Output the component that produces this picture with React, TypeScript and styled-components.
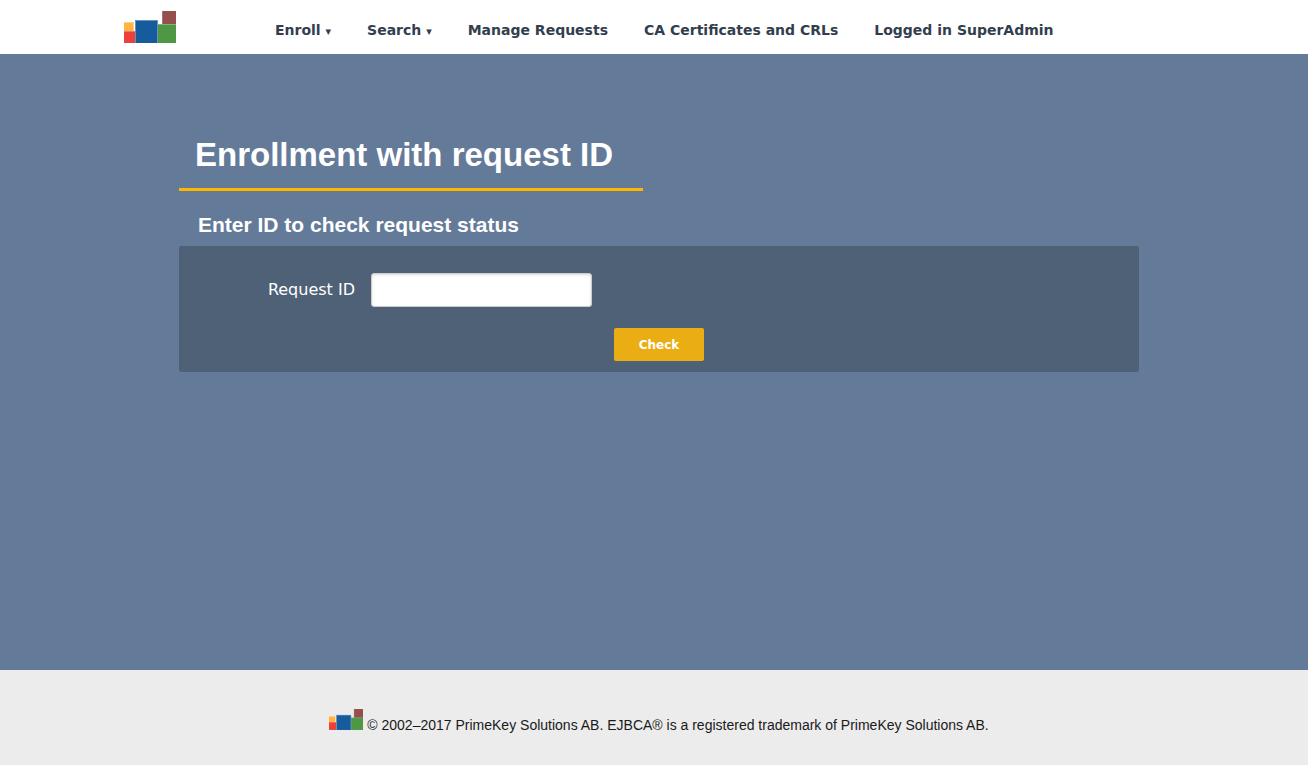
import React from "react";
import styled, { createGlobalStyle } from "styled-components";

const GlobalStyle = createGlobalStyle`
  *, *::before, *::after { box-sizing: border-box; }
  body {
    margin: 0;
    background: #647a99;
    font-family: "DejaVu Sans", sans-serif;
  }
`;

const Page = styled.div`
  min-height: 100vh;
  display: flex;
  flex-direction: column;
`;

const Header = styled.header`
  background: #fff;
  padding: 11px 0 11px 10px;
`;

const HeaderInner = styled.div`
  display: flex;
  align-items: center;
  max-width: 1070px;
  margin: 0 auto;
`;

const LogoSvg = styled.svg<{ $width: number }>`
  display: block;
  flex: none;
  width: ${(p) => p.$width}px;
  height: auto;
`;

const Nav = styled.nav`
  margin-left: 99px;
  padding-top: 8px;
`;

const Menu = styled.ul`
  display: flex;
  flex-wrap: wrap;
  column-gap: 36px;
  margin: 0;
  padding: 0;
  list-style: none;
`;

const MenuLink = styled.a`
  color: #323e4e;
  font-size: 14px;
  line-height: 20px;
  font-weight: bold;
  text-decoration: none;
`;

const Caret = styled.span`
  font-size: 11px;
`;

const Main = styled.main`
  flex: 1;
  padding: 74px 0 32px 10px;
`;

const Content = styled.div`
  max-width: 960px;
  margin: 0 auto;
  color: #fff;
`;

const Title = styled.h1`
  width: fit-content;
  margin: 0;
  padding: 7px 30px 13px 16px;
  border-bottom: 3px solid #ffb700;
  font: bold 33px/40px "Liberation Sans", Arial, sans-serif;
`;

const Subtitle = styled.h2`
  margin: 21px 0 8px 19px;
  font: bold 21px/26px "Liberation Sans", Arial, sans-serif;
`;

const Panel = styled.form`
  padding: 27px 16px 11px;
  border-radius: 2px;
  background: #4f6177;
`;

const Field = styled.div`
  display: flex;
  align-items: center;
  gap: 16px;
`;

const Label = styled.label`
  width: 160px;
  text-align: right;
  font-size: 16px;
  line-height: 20px;
`;

const TextInput = styled.input`
  width: 221px;
  height: 34px;
  padding: 6px 8px;
  border: 1px solid #ccc;
  border-radius: 3px;
  background: #fff;
  box-shadow: inset 0 1px 3px #ddd;
  font: 14px "DejaVu Sans", sans-serif;
`;

const Actions = styled.div`
  display: flex;
  justify-content: center;
  margin-top: 21px;
`;

const Button = styled.button`
  height: 33px;
  min-width: 90px;
  padding: 0 24px;
  border: 0;
  border-radius: 2px;
  background: #eaae14;
  color: #fff;
  font: bold 12px/16px "DejaVu Sans", sans-serif;
`;

const Footer = styled.footer`
  display: flex;
  justify-content: center;
  align-items: flex-start;
  gap: 4px;
  min-height: 95px;
  padding: 39px 0 30px 10px;
  background: #ececec;
  color: #1a1a1a;
`;

const Copyright = styled.p`
  margin: 0;
  padding-top: 6px;
  font: 14px/20px "Liberation Sans", Arial, sans-serif;
`;

function Logo({ width }: { width: number }) {
  return (
    <LogoSvg $width={width} viewBox="0 0 52 32" role="img" aria-label="PrimeKey">
      <path d="M38 0h14v14H38z" fill="#a87370" />
      <path d="M39 0h13v14H39z" fill="#954f4c" />
      <path d="M0 11h10v10H0z" fill="#ffd08a" />
      <path d="M0 12h9v9H0z" fill="#ffb540" />
      <path d="M0 20h11v12H0z" fill="#f37674" />
      <path d="M0 21h11v11H0z" fill="#ec403d" />
      <path d="M33 13h19v19H33z" fill="#82b47c" />
      <path d="M34 14h18v18H34z" fill="#4f9645" />
      <path d="M11 9h23v23H11z" fill="#6592be" />
      <path d="M12 10h21v22H12z" fill="#165b9c" />
    </LogoSvg>
  );
}

const menuItems = [
  { label: "Enroll", hasMenu: true },
  { label: "Search", hasMenu: true },
  { label: "Manage Requests" },
  { label: "CA Certificates and CRLs" },
  { label: "Logged in SuperAdmin" },
];

export default function App() {
  return (
    <Page>
      <GlobalStyle />
      <Header>
        <HeaderInner>
          <Logo width={52} />
          <Nav>
            <Menu>
              {menuItems.map((item) => (
                <li key={item.label}>
                  <MenuLink href="#">
                    {item.label}
                    {item.hasMenu && <> <Caret>▾</Caret></>}
                  </MenuLink>
                </li>
              ))}
            </Menu>
          </Nav>
        </HeaderInner>
      </Header>
      <Main>
        <Content>
          <Title>Enrollment with request ID</Title>
          <Subtitle>Enter ID to check request status</Subtitle>
          <Panel onSubmit={(e) => e.preventDefault()}>
            <Field>
              <Label htmlFor="requestId">Request ID</Label>
              <TextInput id="requestId" type="text" />
            </Field>
            <Actions>
              <Button type="submit">Check</Button>
            </Actions>
          </Panel>
        </Content>
      </Main>
      <Footer>
        <Logo width={34} />
        <Copyright>
          © 2002–2017 PrimeKey Solutions AB. EJBCA® is a registered trademark of PrimeKey Solutions AB.
        </Copyright>
      </Footer>
    </Page>
  );
}
